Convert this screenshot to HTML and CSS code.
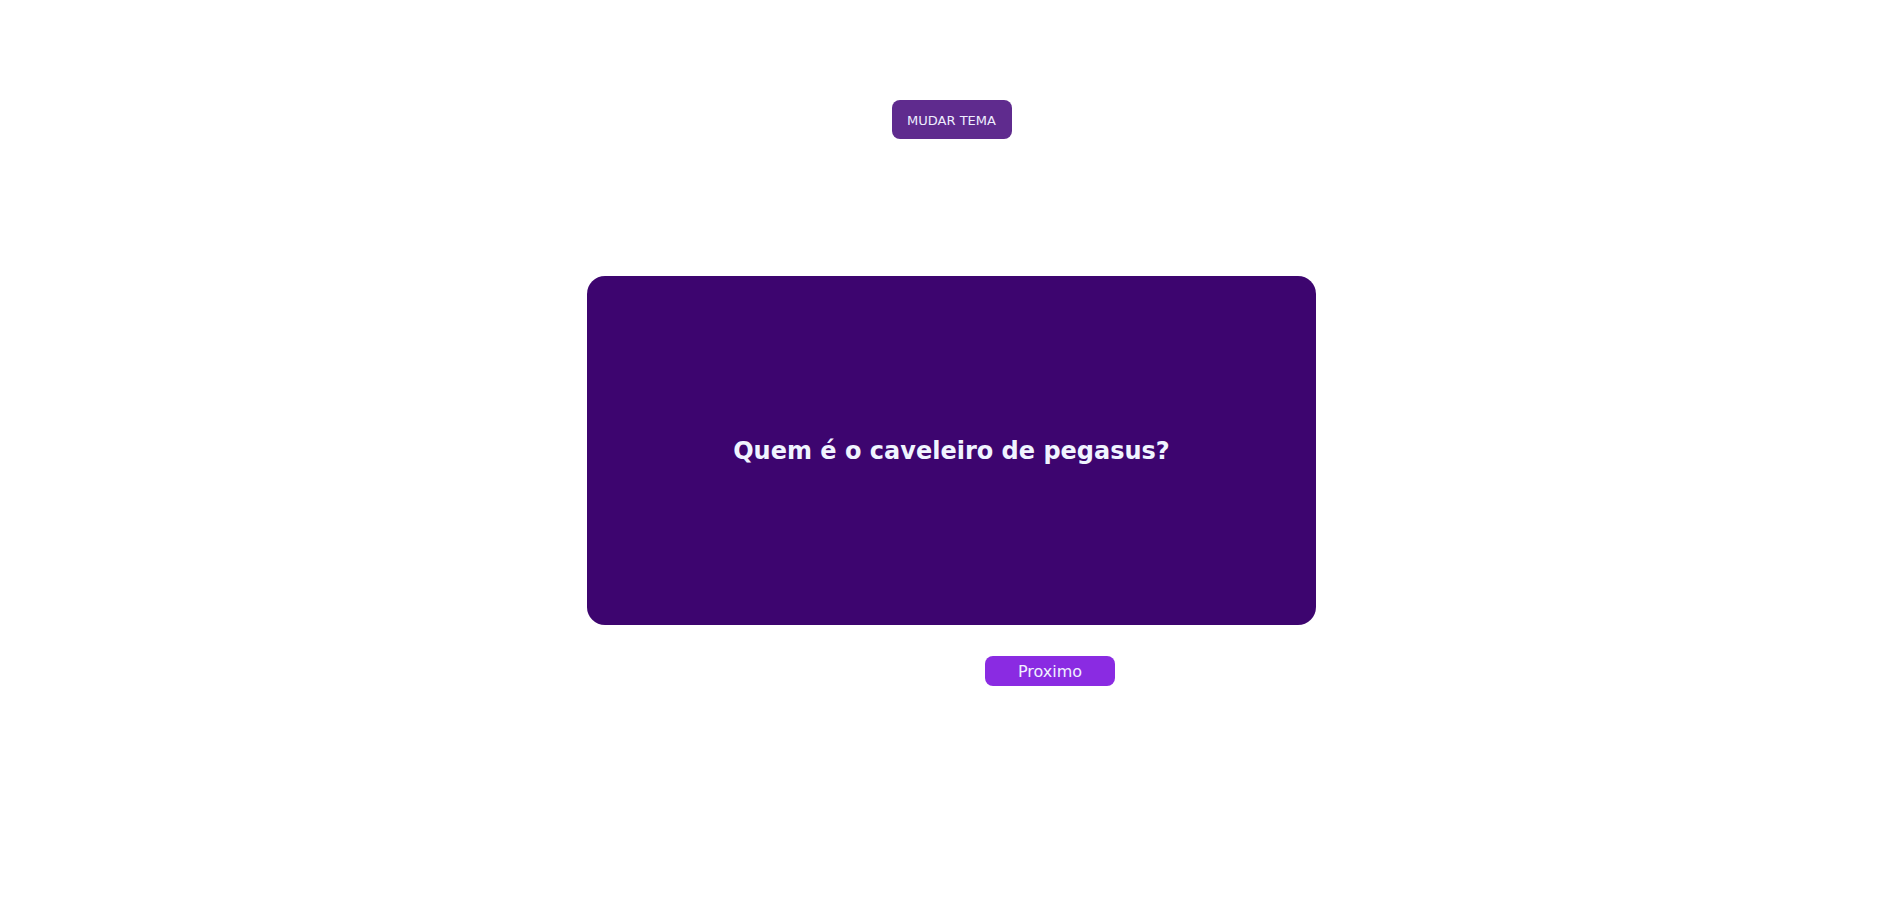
FILE: index.html
```html
<!DOCTYPE html>
<html lang="pt">
<head>
<meta charset="utf-8">
<title>Flashcards</title>
<link rel="stylesheet" href="styles.css">
</head>
<body>
<main class="app">
  <button class="theme-btn">MUDAR TEMA</button>
  <section class="card">
    <h2 class="question">Quem é o caveleiro de pegasus?</h2>
  </section>
  <div class="controls">
    <button class="next-btn">Proximo</button>
  </div>
</main>
</body>
</html>
```

FILE: styles.css
```css
html, body {
  margin: 0;
  padding: 0;
  background: #ffffff;
  font-family: "DejaVu Sans", Verdana, sans-serif;
}

.app {
  display: flex;
  flex-direction: column;
  align-items: center;
  padding-top: 100px;
  padding-left: 2px;
}

.theme-btn {
  width: 120px;
  height: 39px;
  border: none;
  border-radius: 8px;
  background: #5f2b8e;
  color: #eeeeff;
  font-family: "DejaVu Sans", Verdana, sans-serif;
  font-size: 13px;
  line-height: 1;
  padding: 2px 0 0 0;
  cursor: pointer;
}

.card {
  margin-top: 137px;
  width: 729px;
  height: 349px;
  border-radius: 18px;
  background: #3d056f;
  display: flex;
  align-items: center;
  justify-content: center;
}

.question {
  margin: 0;
  color: #f0f4ff;
  font-size: 24px;
  font-weight: bold;
}

.controls {
  margin-top: 31px;
  display: flex;
  justify-content: center;
  padding-left: 197px;
}

.next-btn {
  width: 130px;
  height: 30px;
  border: none;
  border-radius: 8px;
  background: #8a2be2;
  color: #f0f0ff;
  font-family: "DejaVu Sans", Verdana, sans-serif;
  font-size: 16px;
  padding: 0;
  cursor: pointer;
}
```
